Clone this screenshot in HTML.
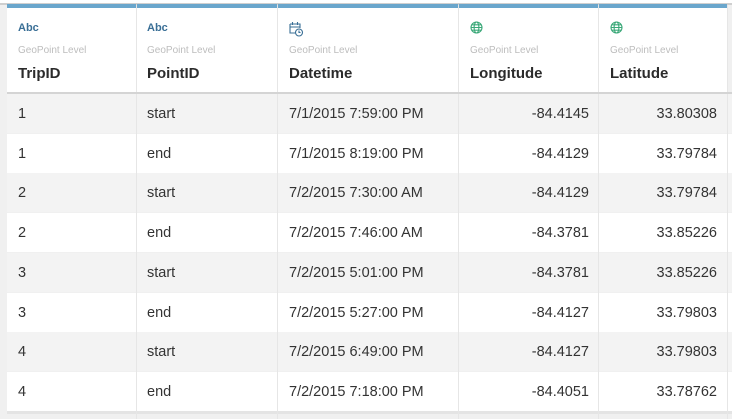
<!DOCTYPE html>
<html><head><style>
*{margin:0;padding:0;box-sizing:border-box}
body{width:732px;height:414px;overflow:hidden;background:#f0f0f0;font-family:"Liberation Sans",sans-serif;position:relative}
.hdr{position:absolute;top:4px;height:88px;background:#fff;border-top:4px solid #6aa6cc}
.t{position:absolute;font-size:11px;font-weight:bold;color:#3a6f96;top:22px}
.lvl{position:absolute;font-size:10px;color:#bdbdbd;top:45px}
.nm{position:absolute;font-size:15px;font-weight:bold;color:#2b2b2b;top:65px}
.row{position:absolute;left:7px;width:725px;height:39px}
.c{position:absolute;top:1px;height:39px;line-height:39px;font-size:14.5px;color:#333}
.r{text-align:right}
.sep{position:absolute;top:0;width:1px;height:414px;background:#e6e6e6}
</style></head><body>
<div style="position:absolute;top:0;left:0;width:732px;height:4px;background:#fff"></div>
<div style="position:absolute;top:3px;left:0;width:732px;height:2px;background:#cfcfcf"></div>
<div id="rows"></div>
<div class="hdr" style="left:7px;width:129px"></div>
<div class="hdr" style="left:137px;width:140px"></div>
<div class="hdr" style="left:278px;width:180px"></div>
<div class="hdr" style="left:459px;width:139px"></div>
<div class="hdr" style="left:599px;width:128px"></div>
<div style="position:absolute;top:92px;left:7px;width:725px;height:2px;background:#d4d4d4"></div>
<div class="t" style="left:18px">Abc</div>
<div class="t" style="left:147px">Abc</div>
<svg style="position:absolute;left:289px;top:21px" width="15" height="16" viewBox="0 0 15 16" fill="none" stroke="#3a6f96" stroke-width="1.1"><path d="M1 3h10v4M1 3v9h5M1 6h10M3.5 1v3M8.5 1v3"/><circle cx="10" cy="11.5" r="3.5"/><path d="M10 9.5v2h1.5"/></svg>
<svg style="position:absolute;left:470px;top:21px" width="13" height="13" viewBox="0 0 13 13" fill="none" stroke="#3aa878" stroke-width="1.1"><circle cx="6.5" cy="6.5" r="5.5"/><ellipse cx="6.5" cy="6.5" rx="2.4" ry="5.5"/><path d="M1 6.5h11M2 3.8h9M2 9.2h9"/></svg>
<svg style="position:absolute;left:610px;top:21px" width="13" height="13" viewBox="0 0 13 13" fill="none" stroke="#3aa878" stroke-width="1.1"><circle cx="6.5" cy="6.5" r="5.5"/><ellipse cx="6.5" cy="6.5" rx="2.4" ry="5.5"/><path d="M1 6.5h11M2 3.8h9M2 9.2h9"/></svg>
<div class="lvl" style="left:18px">GeoPoint Level</div>
<div class="lvl" style="left:147px">GeoPoint Level</div>
<div class="lvl" style="left:289px">GeoPoint Level</div>
<div class="lvl" style="left:470px">GeoPoint Level</div>
<div class="lvl" style="left:610px">GeoPoint Level</div>
<div class="nm" style="left:18px">TripID</div>
<div class="nm" style="left:147px">PointID</div>
<div class="nm" style="left:289px">Datetime</div>
<div class="nm" style="left:470px">Longitude</div>
<div class="nm" style="left:610px">Latitude</div>
<script>
var d=[["1","start","7/1/2015 7:59:00 PM","-84.4145","33.80308"],["1","end","7/1/2015 8:19:00 PM","-84.4129","33.79784"],["2","start","7/2/2015 7:30:00 AM","-84.4129","33.79784"],["2","end","7/2/2015 7:46:00 AM","-84.3781","33.85226"],["3","start","7/2/2015 5:01:00 PM","-84.3781","33.85226"],["3","end","7/2/2015 5:27:00 PM","-84.4127","33.79803"],["4","start","7/2/2015 6:49:00 PM","-84.4127","33.79803"],["4","end","7/2/2015 7:18:00 PM","-84.4051","33.78762"]];
var h="";
d.forEach(function(r,i){var top=94+i*39.7;var bg=i%2?"#fff":"#f3f3f3";
h+='<div class="row" style="top:'+top+'px;background:'+bg+'">'+
'<div class="c" style="left:11px">'+r[0]+'</div>'+
'<div class="c" style="left:140px">'+r[1]+'</div>'+
'<div class="c" style="left:282px">'+r[2]+'</div>'+
'<div class="c r" style="left:452px;width:130px">'+r[3]+'</div>'+
'<div class="c r" style="left:592px;width:118px">'+r[4]+'</div></div>';});
h+='<div style="position:absolute;left:7px;top:411px;width:725px;height:3px;background:#e4e4e4"></div>';
[136,277,458,598,727].forEach(function(x){h+='<div class="sep" style="left:'+x+'px;top:5px"></div>';});
document.getElementById("rows").innerHTML=h;
</script>
</body></html>
